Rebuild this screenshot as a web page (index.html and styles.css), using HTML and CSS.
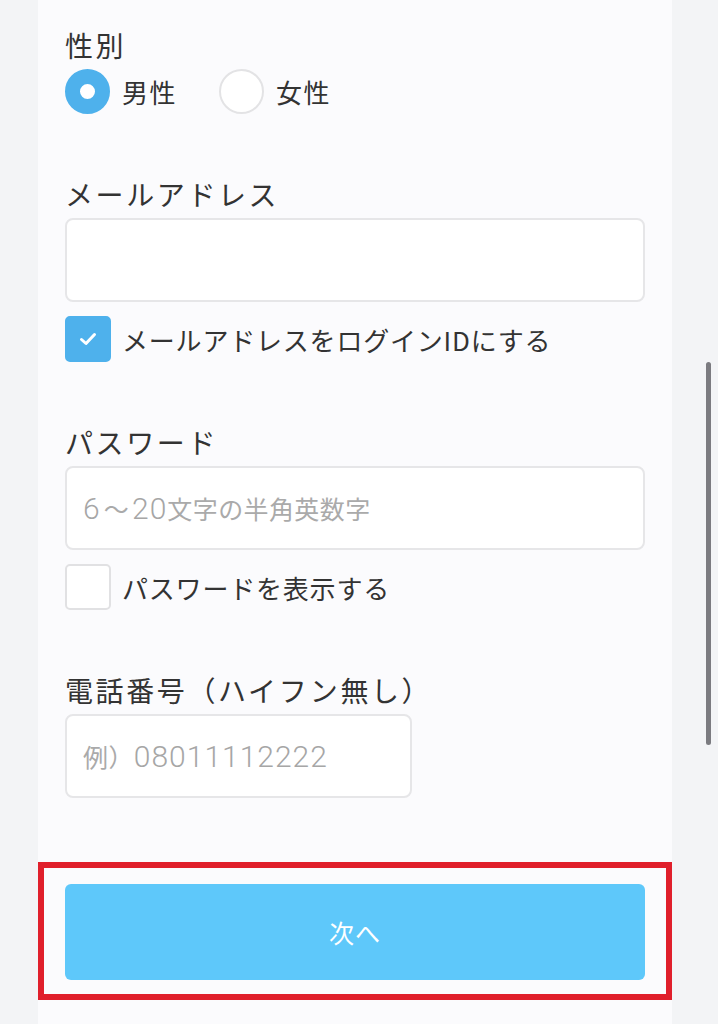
FILE: index.html
```html
<!DOCTYPE html>
<html lang="ja">

<head>
    <meta charset="UTF-8">
    <meta name="viewport" content="width=device-width, initial-scale=1.0">
    <title>会員登録</title>
    <link rel="stylesheet" href="styles.css">
</head>

<body>
    <div class="panel">
        <div class="field">
            <div class="label">性別</div>
            <div class="radio-row">
                <label class="radio checked"><span class="dot"></span>男性</label>
                <label class="radio"><span class="dot"></span>女性</label>
            </div>
        </div>

        <div class="field">
            <div class="label">メールアドレス</div>
            <div class="input"></div>
            <label class="check checked">
                <span class="box">
                    <svg width="20" height="16" viewBox="0 0 20 16">
                        <path d="M3.5 8.5 L8 12.5 L16.5 3.5" fill="none" stroke="#fff" stroke-width="3" stroke-linecap="round" stroke-linejoin="round" />
                    </svg>
                </span>
                メールアドレスをログインIDにする
            </label>
        </div>

        <div class="field">
            <div class="label">パスワード</div>
            <div class="input">
                <span class="placeholder"><span class="num">6</span><span class="tilde">〜</span><span class="num">20</span>文字の半角英数字</span>
            </div>
            <label class="check"><span class="box"></span>パスワードを表示する</label>
        </div>

        <div class="field">
            <div class="label">電話番号（ハイフン無し）</div>
            <div class="input input-short">
                <span class="placeholder">例）<span class="num">08011112222</span></span>
            </div>
        </div>

        <div class="next-area">
            <div class="next-btn">次へ</div>
        </div>
    </div>
    <div class="scrollbar"></div>
</body>

</html>
```

FILE: styles.css
```css
* {
    margin: 0;
    padding: 0;
    box-sizing: border-box;
}

body {
    background-color: #f3f4f6;
    font-family: "Noto Sans CJK JP", "Noto Sans", sans-serif;
    color: #333;
    height: 1024px;
    overflow: hidden;
}

.panel {
    width: 634px;
    margin-left: 38px;
    min-height: 1024px;
    background-color: #fbfbfd;
    padding: 25px 0 0;
}

.field {
    padding: 0 27px;
    margin-bottom: 60px;
}

.label {
    font-size: 28px;
    line-height: 40px;
    letter-spacing: 2.6px;
    margin-bottom: 4px;
}

.radio-row {
    display: flex;
    gap: 42px;
}

.radio {
    display: flex;
    align-items: center;
    gap: 12px;
    font-size: 26px;
    line-height: 45px;
    letter-spacing: 1.5px;
}

.radio .dot {
    width: 45px;
    height: 45px;
    border-radius: 50%;
    background-color: #fff;
    border: 2px solid #e3e3e5;
}

.radio.checked .dot {
    border: 15px solid #4eb1ec;
}

.input {
    height: 84px;
    background-color: #fff;
    border: 2px solid #e6e6e8;
    border-radius: 8px;
    display: flex;
    align-items: center;
    padding-left: 16px;
}

.input-short {
    width: 347px;
}

.placeholder {
    font-size: 25px;
    color: #aaa;
    letter-spacing: 0.4px;
}

.placeholder .num {
    font-family: Roboto, "Noto Sans", sans-serif;
    font-weight: 300;
    font-size: 30px;
    letter-spacing: 1px;
    color: #a6a6a6;
}

.placeholder .tilde {
    margin: 0 3px;
}

.check {
    display: flex;
    align-items: center;
    gap: 11px;
    margin-top: 14px;
    font-size: 26px;
    letter-spacing: 0.8px;
}

.check .box {
    width: 46px;
    height: 46px;
    border-radius: 5px;
    background-color: #fff;
    border: 2px solid #e1e1e3;
    display: flex;
    align-items: center;
    justify-content: center;
}

.check.checked .box {
    background-color: #4eb1ec;
    border-color: #4eb1ec;
}

.next-area {
    margin-top: 64px;
    border: 6px solid #e01f2b;
    padding: 16px 21px 14px;
}

.next-btn {
    height: 96px;
    background-color: #5ec8fa;
    border-radius: 6px;
    color: #fff;
    font-size: 25px;
    letter-spacing: 1px;
    display: flex;
    align-items: center;
    justify-content: center;
}

.scrollbar {
    position: absolute;
    left: 706px;
    top: 362px;
    width: 5px;
    height: 383px;
    border-radius: 3px;
    background-color: #7b7b80;
}
```
